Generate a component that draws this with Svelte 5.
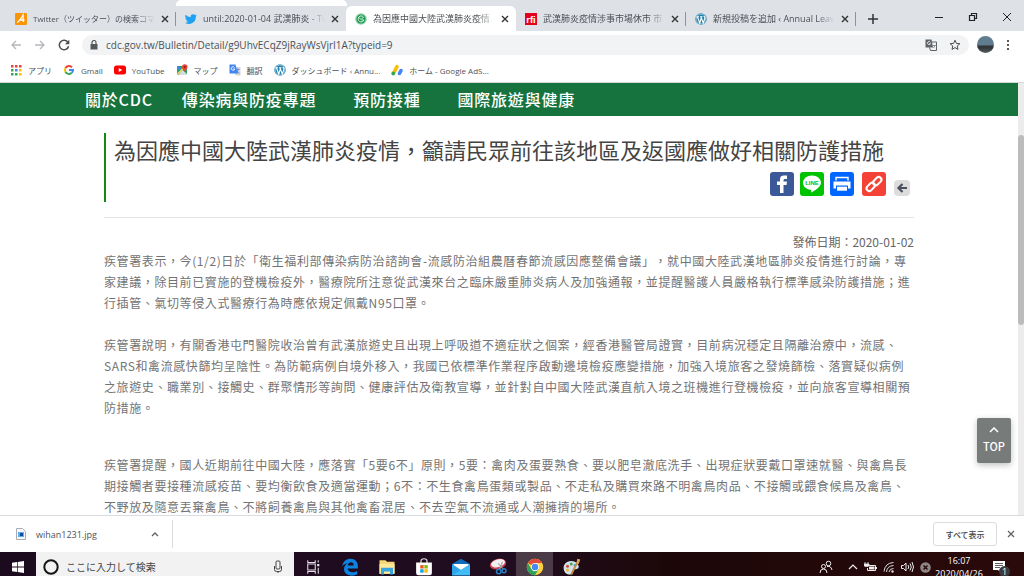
<script lang="ts">
  interface Tab {
    title: string;
    icon: string;
    active?: boolean;
    divider?: boolean;
    dense?: boolean;
  }

  const tabs: Tab[] = [
    { title: 'Twitter（ツイッター）の検索コマ', icon: 'analytics', divider: true, dense: true },
    { title: 'until:2020-01-04 武漢肺炎 - Tw', icon: 'twitter' },
    { title: '為因應中國大陸武漢肺炎疫情.', icon: 'cdc', active: true },
    { title: '武漢肺炎疫情涉事市場休市 市', icon: 'rfi', divider: true },
    { title: '新規投稿を追加 ‹ Annual Leave', icon: 'wordpress', divider: true },
  ];

  const bookmarks = [
    { label: 'アプリ', icon: 'apps' },
    { label: 'Gmail', icon: 'google' },
    { label: 'YouTube', icon: 'youtube' },
    { label: 'マップ', icon: 'maps' },
    { label: '翻訳', icon: 'translate' },
    { label: 'ダッシュボード ‹ Annu...', icon: 'wordpress' },
    { label: 'ホーム - Google AdS...', icon: 'adsense' },
  ];

  const navItems = ['關於CDC', '傳染病與防疫專題', '預防接種', '國際旅遊與健康'];

  const paragraphs = [
    '疾管署表示，今(1/2)日於「衛生福利部傳染病防治諮詢會-流感防治組農曆春節流感因應整備會議」，就中國大陸武漢地區肺炎疫情進行討論，專家建議，除目前已實施的登機檢疫外，醫療院所注意從武漢來台之臨床嚴重肺炎病人及加強通報，並提醒醫護人員嚴格執行標準感染防護措施；進行插管、氣切等侵入式醫療行為時應依規定佩戴N95口罩。',
    '疾管署說明，有關香港屯門醫院收治曾有武漢旅遊史且出現上呼吸道不適症狀之個案，經香港醫管局證實，目前病況穩定且隔離治療中，流感、SARS和禽流感快篩均呈陰性。為防範病例自境外移入，我國已依標準作業程序啟動邊境檢疫應變措施，加強入境旅客之發燒篩檢、落實疑似病例之旅遊史、職業別、接觸史、群聚情形等詢問、健康評估及衛教宣導，並針對自中國大陸武漢直航入境之班機進行登機檢疫，並向旅客宣導相關預防措施。',
    '疾管署提醒，國人近期前往中國大陸，應落實「5要6不」原則，5要：禽肉及蛋要熟食、要以肥皂澈底洗手、出現症狀要戴口罩速就醫、與禽鳥長期接觸者要接種流感疫苗、要均衡飲食及適當運動；6不：不生食禽鳥蛋類或製品、不走私及購買來路不明禽鳥肉品、不接觸或餵食候鳥及禽鳥、不野放及隨意丟棄禽鳥、不將飼養禽鳥與其他禽畜混居、不去空氣不流通或人潮擁擠的場所。',
  ];

  const pinned = ['taskview', 'edge', 'explorer', 'store', 'mail', 'snip', 'chrome', 'paint'];

  let url = $state('cdc.gov.tw/Bulletin/Detail/g9UhvECqZ9jRayWsVjrI1A?typeid=9');
  let query = $state('');
</script>

{#snippet siteIcon(name: string)}
  <svg class="site-icon" viewBox="0 0 24 24" aria-hidden="true">
    {#if name === 'analytics'}
      <rect width="24" height="24" rx="2" fill="#f89406" />
      <path d="M4 19 C8 17 13 10 16 4 L17 18 M8 14 H19" fill="none" stroke="#fff" stroke-width="2.6" />
    {:else if name === 'twitter'}
      <path fill="#1da1f2" d="M23.6 4.9a9.600 9.600 0 0 1-2.800.8 4.900 4.900 0 0 0 2.100-2.700 9.700 9.700 0 0 1-3.100 1.200 4.900 4.900 0 0 0-8.400 4.500A13.900 13.900 0 0 1 1.300 3.500a4.900 4.900 0 0 0 1.500 6.500 4.800 4.800 0 0 1-2.200-.6c0 2.300 1.500 4.300 3.900 4.800a4.900 4.900 0 0 1-2.200.1 4.900 4.900 0 0 0 4.600 3.400A9.900 9.900 0 0 1 0 19.700 13.900 13.900 0 0 0 21.500 7.300a10 10 0 0 0 2.100-2.400z" />
    {:else if name === 'cdc'}
      <circle cx="12" cy="12" r="11.500" fill="#8fd2a8" />
      <circle cx="12" cy="12" r="9" fill="#1c9a50" />
      <path d="M17 8a6 6 0 1 0 1 6h-5M8 9l4 4 5-5" fill="none" stroke="#d8f5e2" stroke-width="2" />
    {:else if name === 'rfi'}
      <rect width="24" height="24" fill="#e2001a" />
      <text x="12" y="19" text-anchor="middle" font-family="Liberation Sans" font-weight="700" font-size="19" fill="#fff">rfi</text>
    {:else if name === 'wordpress'}
      <circle cx="12" cy="12" r="11.500" fill="#2180ad" />
      <circle cx="12" cy="12" r="9.800" fill="none" stroke="#fff" stroke-width="1" />
      <path d="M3 7.500h5M5 8l4.500 12L13 9M10 7.500h5M12 8l4.500 12L20 10c0-2-2-2-2-4" fill="none" stroke="#fff" stroke-width="2.200" />
    {:else if name === 'apps'}
      {#each ['#ea4335', '#ea4335', '#ea4335', '#34a853', '#4285f4', '#fbbc05', '#34a853', '#34a853', '#fbbc05'] as fill, i}
        <rect x={2 + (i % 3) * 8} y={2 + Math.floor(i / 3) * 8} width="5" height="5" {fill} />
      {/each}
    {:else if name === 'google'}
      <path d="M18 6.500A8 8 0 0 0 5 8" fill="none" stroke="#ea4335" stroke-width="4" />
      <path d="M5 8a8 8 0 0 0 0 8" fill="none" stroke="#fbbc05" stroke-width="4" />
      <path d="M5 16a8 8 0 0 0 12 2" fill="none" stroke="#34a853" stroke-width="4" />
      <path d="M17 18q3-2 3-6h-8" fill="none" stroke="#4285f4" stroke-width="4" />
    {:else if name === 'youtube'}
      <rect x="0" y="3" width="24" height="18" rx="5" fill="#f00" />
      <path d="M9.500 8v8l7-4z" fill="#fff" />
    {:else if name === 'maps'}
      <path d="M2 4h20v18H2z" fill="#1fa463" />
      <path d="M4 22 13 12l9 8v2z" fill="#d5dce0" />
      <path d="M2 21 19 4" stroke="#fdd663" stroke-width="3" />
      <path d="M11 9 4 4H2v8z" fill="#4285f4" />
      <path d="M17.500 17c0-5-5.500-6-5.500-11a5.500 5.500 0 0 1 11 0c0 5-5.500 6-5.500 11z" fill="#ea4335" />
      <circle cx="17.500" cy="6" r="2" fill="#8c1a11" />
    {:else if name === 'translate'}
      <path d="M9 6h14v17H13z" fill="#d2d6da" />
      <path d="M14 11h7M17.500 9v2c0 4-2 6-4 7M15 13l6 6" fill="none" stroke="#5f7ba8" stroke-width="1.500" />
      <path d="M1 1h12l5 18H1z" fill="#4285f4" />
      <path d="M11 7a3.500 3.500 0 1 0 .5 3H8.500" fill="none" stroke="#fff" stroke-width="1.800" />
    {:else if name === 'adsense'}
      <path d="M6 17 12 5" stroke="#fbbc04" stroke-width="7" stroke-linecap="round" />
      <path d="M17 19l3-6" stroke="#4285f4" stroke-width="7" stroke-linecap="round" />
      <circle cx="4.500" cy="19" r="3.800" fill="#34a853" />
    {/if}
  </svg>
{/snippet}

{#snippet taskIcon(name: string)}
  <svg class="task-icon" viewBox="0 0 24 24" aria-hidden="true">
    {#if name === 'taskview'}
      <path d="M5 3v3h10V3M5 21v-3h10v3M5 8h10v8H5zM19 3v3M19 13v8" fill="none" stroke="#e4dfe4" stroke-width="1.400" />
      <path d="M17.500 8h3v3h-3z" fill="#e4dfe4" />
    {:else if name === 'edge'}
      <path fill="#0a84e0" d="M1.500 11C3 4 7.500 1 12.500 1 19 1 22.500 5.500 22.500 11v3H9c.2 3.500 3.300 5 6.500 5 2.300 0 4.300-.6 6-1.700v4.400C19.500 23 17 23.500 14.500 23.500 8 23.500 4 19.500 4 15c0-4 2-7 5.500-8.500C6 7 3.500 8.500 1.500 11zM9 10h8c0-2.800-1.400-4.300-3.700-4.300C11 5.700 9.500 7.500 9 10z" />
    {:else if name === 'explorer'}
      <path d="M2 3h8l2 2h10v16H2z" fill="#f8d775" />
      <path d="M2 8h20v13H2z" fill="#ffe89a" />
      <path d="M4 22v-9h16v9h-4v-4H8v4z" fill="#38a6dc" />
    {:else if name === 'store'}
      <path d="M8 7V4q0-3 4-3t4 3v3" fill="none" stroke="#ddd" stroke-width="1.600" />
      <path d="M1.500 6h21v14q0 3-3 3h-15q-3 0-3-3z" fill="#fff" />
      <path d="M7 9.500h4.500V14H7z" fill="#f25022" />
      <path d="M12.500 9.500H17V14h-4.500z" fill="#7fba00" />
      <path d="M7 15h4.500v4.500H7z" fill="#00a4ef" />
      <path d="M12.500 15H17v4.500h-4.500z" fill="#ffb900" />
    {:else if name === 'mail'}
      <path d="M0 8 12 1l12 7v15H0z" fill="#0f6cbd" />
      <path d="M2 8h20v8H2z" fill="#fff" />
      <path d="M0 8l12 8 12-8v15H0z" fill="#2da5ea" />
      <path d="M0 23 24 9v14z" fill="#41bcf5" />
    {:else if name === 'snip'}
      <ellipse cx="12" cy="8" rx="11" ry="7" transform="rotate(-15 12 8)" fill="#d4404a" />
      <ellipse cx="12" cy="7" rx="9.500" ry="5.200" transform="rotate(-15 12 7)" fill="#f4eff0" />
      <path d="M12 7l7 8M18 5l-4 10" stroke="#9aa4ad" stroke-width="1.500" />
      <circle cx="13" cy="18" r="3" fill="none" stroke="#277fc2" stroke-width="2" />
      <circle cx="20" cy="17" r="2.600" fill="none" stroke="#277fc2" stroke-width="2" />
    {:else if name === 'chrome'}
      <circle cx="12" cy="12" r="11" fill="#fdd23c" />
      <path d="M12 12 2.500 6.500A11 11 0 0 1 21.500 6.500H12z" fill="#e24a3b" />
      <path d="M2.500 6.500A11 11 0 0 0 12 23l5-8.500L12 12 7 14.500z" fill="#2da05a" />
      <circle cx="12" cy="12" r="5.500" fill="#fff" />
      <circle cx="12" cy="12" r="4.300" fill="#4687f0" />
    {:else}
      <path d="M11 4C4 4 0 9 1 15c1 7 9 9 12 5 1-2 0-4 3-5 5 0 6-3 4-6-2-4-6-5-9-5z" fill="#cfe3ee" />
      <circle cx="6" cy="11" r="2" fill="#d8432f" />
      <circle cx="11" cy="8" r="2" fill="#4aa54a" />
      <circle cx="6" cy="16" r="2" fill="#f0b429" />
      <circle cx="16" cy="10" r="1.800" fill="#2e78c8" />
      <path d="M11 22 19 6" stroke="#c88a3d" stroke-width="2.400" />
      <path d="M18 7l1-6 4 1-2 6z" fill="#e0a45c" />
    {/if}
  </svg>
{/snippet}

<div class="desktop">
  <header class="tab-strip">
    {#each tabs as tab}
      <div class="tab" class:active={tab.active} class:divider={tab.divider}>
        {@render siteIcon(tab.icon)}
        <span class="tab-title" class:dense={tab.dense}>{tab.title}</span>
        <button class="icon-btn" aria-label="タブを閉じる">
          <svg width="8" height="8" viewBox="0 0 8 8"><path d="M1 1l6 6M7 1 1 7" stroke="#333" stroke-width="1.400" /></svg>
        </button>
      </div>
    {/each}
    <button class="icon-btn new-tab" aria-label="新しいタブ">
      <svg width="10" height="10" viewBox="0 0 10 10"><path d="M5 0v10M0 5h10" stroke="#333" stroke-width="1.500" /></svg>
    </button>
    <div class="window-controls">
      <button class="icon-btn" aria-label="最小化">
        <svg width="10" height="10" viewBox="0 0 10 10"><path d="M1 5.500h8" stroke="#222" /></svg>
      </button>
      <button class="icon-btn" aria-label="元に戻す">
        <svg width="10" height="10" viewBox="0 0 10 10"><path d="M1.500 3.500h5v5h-5zM3.500 3V1.500h5v5H7" fill="none" stroke="#222" stroke-width="1.200" /></svg>
      </button>
      <button class="icon-btn" aria-label="閉じる">
        <svg width="10" height="10" viewBox="0 0 10 10"><path d="M1 1l8 8M9 1 1 9" stroke="#222" /></svg>
      </button>
    </div>
  </header>

  <div class="toolbar">
    <button class="icon-btn" aria-label="戻る">
      <svg width="12" height="12" viewBox="0 0 12 12"><path d="M11 6H2M6 2 2 6l4 4" fill="none" stroke="#b4b7ba" stroke-width="1.300" /></svg>
    </button>
    <button class="icon-btn" aria-label="進む">
      <svg width="12" height="12" viewBox="0 0 12 12"><path d="M1 6h9M6 2l4 4-4 4" fill="none" stroke="#b4b7ba" stroke-width="1.300" /></svg>
    </button>
    <button class="icon-btn" aria-label="再読み込み">
      <svg width="12" height="12" viewBox="0 0 12 12"><path d="M10 3.500A4.700 4.700 0 1 0 10.600 7.200" fill="none" stroke="#4a4d51" stroke-width="1.500" /><path d="M11.300.8v4.400H7z" fill="#4a4d51" /></svg>
    </button>
    <div class="omnibox">
      <svg width="8" height="10" viewBox="0 0 8 10" aria-hidden="true"><path d="M.5 4h7v5.500h-7z" fill="#55585c" /><path d="M2 4V2.500a2 2 0 0 1 4 0V4" fill="none" stroke="#55585c" stroke-width="1.200" /></svg>
      <input type="text" aria-label="アドレス" spellcheck="false" bind:value={url} />
      <button class="icon-btn" aria-label="翻訳">
        <svg width="12" height="12" viewBox="0 0 12 12"><path d="M.5.5h6l1.500 8H.5z" fill="#5f6368" /><path d="M7 3h4.500v8.500H5.500l-1-3" fill="none" stroke="#5f6368" /><path d="M5.500 3.200a1.600 1.600 0 1 0 .1 1.500H4.200" fill="none" stroke="#fff" stroke-width=".8" /><path d="M8 6.500h2.800M9.800 6.500Q9.500 8 8.400 9" fill="none" stroke="#5f6368" stroke-width=".7" /></svg>
      </button>
      <button class="icon-btn" aria-label="ブックマーク">
        <svg width="12" height="12" viewBox="0 0 12 12"><path d="M6 1.200l1.400 3.200 3.500.3-2.700 2.300.8 3.400L6 8.600l-3 1.800.8-3.400L1.100 4.700l3.500-.3z" fill="none" stroke="#4a4d51" /></svg>
      </button>
    </div>
    <button class="avatar" aria-label="プロフィール"></button>
    <button class="icon-btn" aria-label="メニュー">
      <svg width="4" height="12" viewBox="0 0 4 12"><path d="M1 1h2v2H1zM1 5h2v2H1zM1 9h2v2H1z" fill="#55585c" /></svg>
    </button>
  </div>

  <nav class="bookmarks" aria-label="ブックマーク">
    {#each bookmarks as mark}
      <a href="#{mark.icon}">{@render siteIcon(mark.icon)}{mark.label}</a>
    {/each}
  </nav>

  <div class="viewport">
    <div class="page" lang="zh-Hant">
      <nav class="site-nav">
        <ul>
          {#each navItems as item}
            <li><a href="#nav">{item}</a></li>
          {/each}
        </ul>
      </nav>

      <main>
        <div class="title-wrap">
          <div class="title-block">
            <h1>為因應中國大陸武漢肺炎疫情，籲請民眾前往該地區及返國應做好相關防護措施</h1>
            <div class="share">
              <a class="share-btn facebook" href="#facebook" aria-label="Facebook">
                <svg viewBox="0 0 24 24"><path d="M10 21v-8H7V9.500h3V7.400C10 4.500 11.800 3.500 14 3.500h3V7h-2c-1 0-1.500.5-1.500 1.500v1H17l-.5 3.500h-3v8z" fill="#fff" /></svg>
              </a>
              <a class="share-btn line" href="#line" aria-label="LINE">
                <svg viewBox="0 0 24 24"><path d="M12 3.500c-5 0-9 3.200-9 7.200 0 3.600 3.200 6.500 7.500 7.100.8.200.7 1 .5 2.700 3-1.500 10-5.500 10-9.800 0-4-4-7.200-9-7.200z" fill="#fff" /><text x="12" y="13" text-anchor="middle" font-family="Liberation Sans" font-weight="700" font-size="6" fill="#00c300">LINE</text></svg>
              </a>
              <a class="share-btn print" href="#print" aria-label="列印">
                <svg viewBox="0 0 24 24"><path d="M6 8.500V5.500h12v3" fill="none" stroke="#fff" stroke-width="1.400" /><path d="M3.500 9.500h17v7H18v-3H6v3H3.500z" fill="#fff" /><path d="M7 14.700h10v4H7z" fill="#fff" /></svg>
              </a>
              <a class="share-btn link" href="#link" aria-label="複製連結">
                <svg viewBox="0 0 24 24"><g fill="none" stroke="#fff" stroke-width="2" stroke-linecap="round"><rect x="10.500" y="6.500" width="9.500" height="5.400" rx="2.700" transform="rotate(-45 15.200 9.200)" /><rect x="4" y="12.200" width="9.500" height="5.400" rx="2.700" transform="rotate(-45 8.700 14.900)" /></g></svg>
              </a>
              <a class="back" href="#back" aria-label="回上一頁">
                <svg viewBox="0 0 16 16"><path d="M13 8H5M8.500 4 4.500 8l4 4" fill="none" stroke="#4a5060" stroke-width="2.200" /></svg>
              </a>
            </div>
          </div>
        </div>
        <p class="date">發佈日期：2020-01-02</p>
        <article>
          {#each paragraphs as text}
            <p>{text}</p>
          {/each}
        </article>
      </main>

      <a class="to-top" href="#top">
        <svg width="10" height="6" viewBox="0 0 10 6" aria-hidden="true"><path d="M1 5l4-4 4 4" fill="none" stroke="#fff" stroke-width="1.600" /></svg>
        TOP
      </a>
    </div>
    <div class="scrollbar"><div class="thumb"></div></div>
  </div>

  <div class="downloads">
    <div class="download">
      <svg width="10" height="12" viewBox="0 0 10 12" aria-hidden="true"><path d="M.5.5h6l3 3v8h-9z" fill="#f5f7fa" stroke="#a9adb2" /><path d="M2 4h6v5H2z" fill="#5ab0f0" /><path d="M4 5h3v3H4z" fill="#124a9c" /></svg>
      <span class="file-name">wihan1231.jpg</span>
      <button class="icon-btn" aria-label="ダウンロードのメニュー">
        <svg width="8" height="6" viewBox="0 0 8 6"><path d="M1 5l3-3 3 3" fill="none" stroke="#5f6368" stroke-width="1.300" /></svg>
      </button>
    </div>
    <button class="show-all">すべて表示</button>
    <button class="icon-btn" aria-label="閉じる">
      <svg width="8" height="8" viewBox="0 0 8 8"><path d="M1 1l6 6M7 1 1 7" stroke="#5f6368" stroke-width="1.300" /></svg>
    </button>
  </div>

  <footer class="taskbar">
    <div class="taskbar-row">
      <button class="task-btn start" aria-label="スタート">
        <svg width="12" height="12" viewBox="0 0 12 12"><path d="M0 1.700 5 1v4.600H0zM5.700.9 12 0v5.600H5.700zM0 6.400h5V11l-5-.7zM5.700 6.400H12V12l-6.300-.9z" fill="#fff" /></svg>
      </button>
      <div class="search">
        <svg width="16" height="16" viewBox="0 0 16 16" aria-hidden="true"><circle cx="8" cy="8" r="6.700" fill="none" stroke="#151515" stroke-width="2" /></svg>
        <input type="text" placeholder="ここに入力して検索" aria-label="検索" bind:value={query} />
        <svg width="8" height="14" viewBox="0 0 8 14" aria-hidden="true"><rect x="2" y="1" width="4" height="8" rx="1" fill="none" stroke="#444" /><path d="M.5 6v3.500q0 2 2 2h3q2 0 2-2V6M4 11.500V13" fill="none" stroke="#444" /></svg>
      </div>
      {#each pinned as app}
        <button class="task-btn" class:running={app === 'chrome'} aria-label={app}>{@render taskIcon(app)}</button>
      {/each}

      <div class="tray">
        <svg width="14" height="14" viewBox="0 0 14 14"><g fill="none" stroke="#eee"><circle cx="4.500" cy="6.500" r="2" /><path d="M1 13q0-4 3.500-4T8 13" /><circle cx="9.500" cy="3.500" r="2.300" /><path d="M8 6.500q4-1 5 3.500" /></g></svg>
        <svg class="up" width="10" height="6" viewBox="0 0 10 6"><path d="M1 5l4-4 4 4" fill="none" stroke="#eee" stroke-width="1.200" /></svg>
        <svg width="13" height="10" viewBox="0 0 13 10"><path d="M4 3.500h7.500v5H3.500V6" fill="none" stroke="#eee" /><path d="M5 4.500h5.500v3H5zM12 5h1v2h-1z" fill="#eee" /><path d="M1 0v2M4 0v2M0 2h5v1.500q0 1-2.500 1T0 3.500z" stroke="#eee" fill="#eee" stroke-width=".8" /></svg>
        <svg width="12" height="12" viewBox="0 0 12 12"><g fill="none" stroke="#ddd"><path d="M1 10.500Q2 2 10.500 1.500M3.500 11Q4 5 10.500 4.500M6 11Q6.500 7.500 10.500 7.500" /></g><circle cx="9.500" cy="10.500" r="1.200" fill="#ddd" /></svg>
        <svg width="13" height="12" viewBox="0 0 13 12"><path d="M.5 4.500h2L5 2v8L2.500 7.500h-2zM7 4q1.500 2 0 4M9 2.500q2.500 3.500 0 7M11 1q3 5 0 10" fill="none" stroke="#eee" /></svg>
        <svg width="11" height="11" viewBox="0 0 11 11"><circle cx="5.500" cy="5.500" r="5.300" fill="#8d8586" /><path d="M3.500 3.500l4 4M7.500 3.500l-4 4" stroke="#280a0b" stroke-width="1.500" /></svg>
      </div>
      <div class="clock"><span>16:07</span><span>2020/04/26</span></div>
      <button class="notifications" aria-label="通知">
        <svg width="12" height="12" viewBox="0 0 12 12"><path d="M0 0h12v9H8v3L5 9H0z" fill="#fff" /><path d="M2 2.500h8M2 4.500h8M2 6.500h5" stroke="#333" stroke-width=".8" /></svg>
        <span class="badge">1</span>
      </button>
    </div>
  </footer>
</div>

<style>
  :global(body) {
    margin: 0;
  }

  .desktop {
    display: flex;
    flex-direction: column;
    height: 100vh;
    overflow: hidden;
    background: #fff;
    color: #4d5156;
    font-family: 'Open Sans', 'Noto Sans CJK JP', sans-serif;
    font-size: 9px;
  }

  button {
    margin: 0;
    padding: 0;
    border: 0;
    background: none;
    font: inherit;
    color: inherit;
  }

  a {
    color: inherit;
    text-decoration: none;
  }

  input {
    flex: 1;
    min-width: 0;
    padding: 0;
    border: 0;
    outline: 0;
    background: none;
    font: inherit;
    color: inherit;
  }

  svg {
    flex-shrink: 0;
  }

  .icon-btn {
    display: flex;
    align-items: center;
    justify-content: center;
    flex-shrink: 0;
  }

  .site-icon {
    width: 12px;
    height: 12px;
  }

  /* Tabs */
  .tab-strip {
    position: relative;
    display: flex;
    flex-shrink: 0;
    height: 31px;
    padding-left: 6px;
    background: #dee1e6;
  }

  /* edge of the hover card above the second tab */
  .tab-strip::before {
    content: '';
    position: absolute;
    top: 0;
    left: 176px;
    width: 171px;
    height: 6px;
    border-radius: 5px 5px 0 0;
    background: #fff;
  }

  .tab {
    position: relative;
    display: flex;
    align-items: center;
    flex: 0 1 170px;
    min-width: 0;
    box-sizing: border-box;
    gap: 6px;
    margin-top: 6px;
    padding: 0 7px 0 9px;
  }

  .tab.active {
    border-radius: 6px 6px 0 0;
    background: #fff;
  }

  .tab.divider::after {
    content: '';
    position: absolute;
    right: 0;
    top: 6px;
    width: 1px;
    height: 14px;
    background: #8f9399;
  }

  .tab-title {
    flex: 1;
    overflow: hidden;
    white-space: nowrap;
    mask-image: linear-gradient(to right, #000 85%, transparent);
  }

  .tab-title.dense {
    font-size: 8px;
  }

  .new-tab {
    width: 34px;
    margin-top: 6px;
  }

  .window-controls {
    display: flex;
    gap: 24px;
    margin-left: auto;
    padding: 2px 12px 0 0;
  }

  /* Toolbar */
  .toolbar {
    display: flex;
    align-items: center;
    flex-shrink: 0;
    gap: 12px;
    height: 27px;
    padding: 0 14px 0 10px;
  }

  .omnibox {
    display: flex;
    align-items: center;
    flex: 1;
    gap: 12px;
    height: 20px;
    padding: 0 8px 0 8px;
    border-radius: 10px;
    background: #f1f3f4;
    font-size: 10px;
  }

  .avatar {
    width: 17px;
    height: 17px;
    margin-left: -4px;
    border-radius: 50%;
    background: linear-gradient(#607d8f 0 50%, #33373a 60% 70%, #56605f);
  }

  .omnibox input {
    margin-left: -4px;
  }

  .bookmarks {
    display: flex;
    align-items: center;
    flex-shrink: 0;
    gap: 11px;
    height: 24px;
    padding: 0 10px;
    border-bottom: 1px solid #d5d8da;
    font-size: 8px;
  }

  .bookmarks a {
    display: flex;
    align-items: center;
    gap: 6px;
    white-space: nowrap;
  }

  /* Web page */
  .viewport {
    display: flex;
    flex: 1;
    min-height: 0;
  }

  .page {
    position: relative;
    flex: 1;
    min-width: 0;
    overflow: hidden;
    font-family: 'Noto Sans CJK TC', sans-serif;
    text-spacing-trim: space-all;
  }

  .scrollbar {
    width: 6px;
    padding-top: 52px;
    box-sizing: border-box;
    background: #ececec;
  }

  .thumb {
    height: 50%;
    border-radius: 3px;
    background: #bcbcbc;
  }

  .site-nav {
    background: #16733e;
    color: #fff;
    font-size: 16px;
    font-weight: 500;
    letter-spacing: 0.05em;
    line-height: 33px;
  }

  .site-nav ul {
    display: flex;
    gap: 37px;
    max-width: 848px;
    margin: 0 auto;
    padding: 0;
    list-style: none;
  }

  .site-nav li:first-child {
    margin-right: -8px;
  }

  main {
    max-width: 810px;
    margin: 0 auto;
    padding-top: 17px;
    color: #737373;
    font-size: 12px;
  }

  .title-wrap {
    padding-bottom: 15px;
    border-bottom: 1px solid #e5e5e5;
  }

  .title-block {
    padding: 0 4px 6px 8px;
    border-left: 2px solid #108a10;
  }

  h1 {
    margin: 0;
    padding-bottom: 7px;
    color: #444;
    font-size: 22px;
    font-weight: 400;
    line-height: 32px;
  }

  .share {
    display: flex;
    justify-content: flex-end;
    align-items: flex-end;
    gap: 6px;
  }

  .share-btn {
    height: 24px;
    width: 24px;
    border-radius: 3px;
  }

  .share svg {
    display: block;
  }

  .facebook {
    background: #3b5998;
  }

  .line {
    background: #00c300;
  }

  .print {
    background: #0066ff;
  }

  .link {
    margin-left: 2px;
    background: #f44336;
  }

  .back {
    width: 16px;
    height: 16px;
    margin-left: 2px;
    border-radius: 4px;
    background: #dcdcdc;
  }

  .date {
    margin: 16px 0 0;
    color: #666;
    line-height: 16px;
    text-align: right;
  }

  article p {
    margin: 0 0 21px;
    letter-spacing: 0.05em;
    line-height: 21px;
  }

  article p:last-child {
    margin-top: 36px;
  }

  .to-top {
    position: absolute;
    right: 7px;
    bottom: 52px;
    display: flex;
    flex-direction: column;
    align-items: center;
    justify-content: center;
    gap: 4px;
    width: 34px;
    height: 45px;
    border-radius: 2px;
    background: #777b7a;
    box-shadow: 0 2px 6px rgba(0, 0, 0, 0.25);
    color: #fff;
    font-size: 11px;
    font-weight: 500;
    line-height: 18px;
  }

  /* Downloads */
  .downloads {
    display: flex;
    align-items: center;
    flex-shrink: 0;
    gap: 10px;
    height: 36px;
    padding-right: 9px;
    border-top: 1px solid #dadce0;
  }

  .download {
    display: flex;
    align-items: center;
    gap: 10px;
    width: 173px;
    height: 28px;
    box-sizing: border-box;
    padding: 0 13px 0 16px;
    border-right: 1px solid #dadce0;
  }

  .file-name {
    flex: 1;
  }

  .show-all {
    width: 64px;
    height: 24px;
    margin-left: auto;
    border: 1px solid #dadce0;
    border-radius: 3px;
    color: #3c4043;
    font-size: 8px;
    font-weight: 500;
  }

  /* Taskbar, its lower edge runs past the screen */
  .taskbar {
    flex-shrink: 0;
    height: 24px;
    overflow: hidden;
    background: linear-gradient(to right, #1c0a1f, #210d20 50%, #1c0708 65%, #2b0a0b);
  }

  .taskbar-row {
    display: flex;
    align-items: center;
    height: 30px;
  }

  .task-btn {
    display: flex;
    align-items: center;
    justify-content: center;
    width: 37px;
    height: 30px;
  }

  .start {
    width: 36px;
  }

  .running {
    background: #4b3b46;
  }

  .task-icon {
    width: 18px;
    height: 18px;
  }

  .search {
    display: flex;
    align-items: center;
    gap: 7px;
    flex: 0 1 258px;
    height: 30px;
    box-sizing: border-box;
    padding: 0 12px 0 7px;
    background: #f2f2f2;
    color: #444;
    font-size: 10px;
  }

  .search input::placeholder {
    color: #444;
    opacity: 1;
  }

  .tray {
    display: flex;
    align-items: center;
    gap: 6px;
    margin-left: auto;
  }

  .up {
    margin-left: 9px;
  }

  .clock {
    display: flex;
    flex-direction: column;
    align-items: center;
    width: 56px;
    color: #fff;
    line-height: 13px;
  }

  .notifications {
    position: relative;
    display: flex;
    margin: 0 19px 0 6px;
  }

  .badge {
    position: absolute;
    top: 5px;
    left: 6px;
    width: 11px;
    height: 11px;
    border-radius: 50%;
    background: #3d3a3b;
    color: #fff;
    line-height: 11px;
    text-align: center;
  }
</style>
